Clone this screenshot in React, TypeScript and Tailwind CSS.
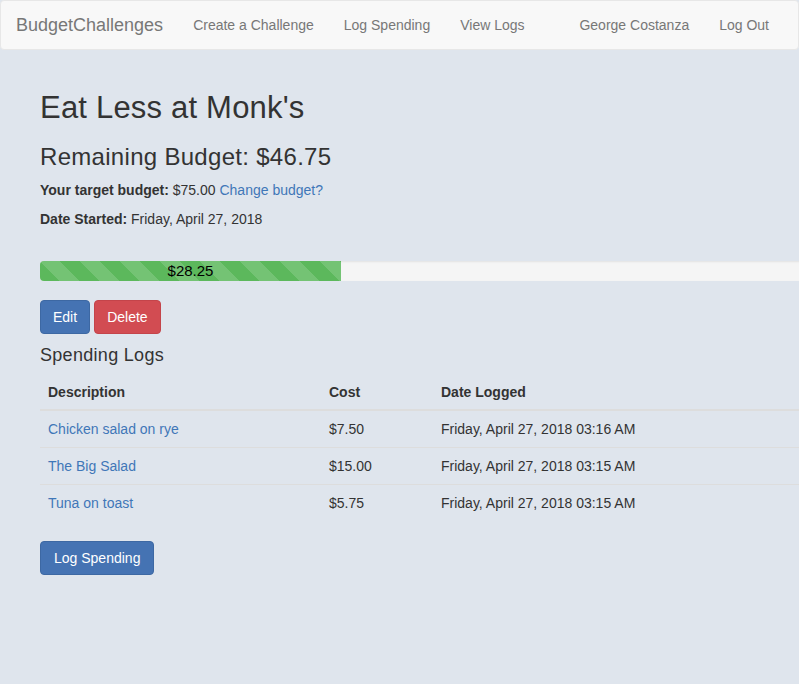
import React from "react";

type Log = {
  description: string;
  cost: string;
  date: string;
};

const logs: Log[] = [
  { description: "Chicken salad on rye", cost: "$7.50", date: "Friday, April 27, 2018 03:16 AM" },
  { description: "The Big Salad", cost: "$15.00", date: "Friday, April 27, 2018 03:15 AM" },
  { description: "Tuna on toast", cost: "$5.75", date: "Friday, April 27, 2018 03:15 AM" },
];

const Navbar = () => (
  <nav className="h-[50px] bg-[#f8f8f8] border border-[#e7e7e7] rounded-[4px] flex items-center justify-between text-[14px] text-[#777]">
    <div className="flex items-center">
      <a className="px-[15px] text-[18px] text-[#777]">BudgetChallenges</a>
      <a className="px-[15px]">Create a Challenge</a>
      <a className="px-[15px]">Log Spending</a>
      <a className="px-[15px]">View Logs</a>
    </div>
    <div className="flex items-center pr-[14px]">
      <a className="px-[15px]">George Costanza</a>
      <a className="px-[15px]">Log Out</a>
    </div>
  </nav>
);

const App = () => {
  return (
    <div className="min-h-[684px] w-full bg-[#dfe5ed] font-['Liberation_Sans',Arial,sans-serif] text-[14px] leading-[20px] text-[#333] overflow-hidden">
      <Navbar />
      <main className="pl-10 pt-[41px] w-[820px]">
        <h1 className="text-[31px] leading-[33px] tracking-[0.2px] mb-5">Eat Less at Monk's</h1>
        <h2 className="text-[24px] leading-[26px] tracking-[0.3px] mb-[10px]">Remaining Budget: $46.75</h2>
        <p className="mb-[9px]">
          <b>Your target budget:</b> $75.00{" "}
          <a className="text-[#3f77b8]">Change budget?</a>
        </p>
        <p className="mb-8">
          <b>Date Started:</b> Friday, April 27, 2018
        </p>

        <div className="h-5 bg-[#f5f5f5] rounded-[4px] overflow-hidden mb-[19px] shadow-[inset_0_1px_2px_rgba(0,0,0,0.08)]">
          <div className="h-5 w-[301px] bg-[#5cb85c] bg-[linear-gradient(45deg,rgba(255,255,255,.15)_25%,transparent_25%,transparent_50%,rgba(255,255,255,.15)_50%,rgba(255,255,255,.15)_75%,transparent_75%,transparent)] bg-[length:40px_40px] text-center text-[15px] leading-5 text-black">
            $28.25
          </div>
        </div>

        <div className="flex gap-1 mb-[11px]">
          <button className="h-[34px] px-3 rounded-[4px] bg-[#4573b3] border border-[#3d68a3] text-white">
            Edit
          </button>
          <button className="h-[34px] px-3 rounded-[4px] bg-[#d24c52] border border-[#c4444a] text-white">
            Delete
          </button>
        </div>

        <h4 className="text-[18px] leading-5 tracking-[0.3px] mb-[9px]">Spending Logs</h4>

        <table className="w-full border-collapse mb-5">
          <thead>
            <tr>
              <th className="w-[281px] text-left font-bold px-2 pt-2 pb-[7px] border-b-2 border-[#dddddd]">Description</th>
              <th className="w-[112px] text-left font-bold px-2 pt-2 pb-[7px] border-b-2 border-[#dddddd]">Cost</th>
              <th className="text-left font-bold px-2 pt-2 pb-[7px] border-b-2 border-[#dddddd]">Date Logged</th>
            </tr>
          </thead>
          <tbody>
            {logs.map((log, i) => (
              <tr key={i}>
                <td className="px-2 py-2 border-t border-[#dddddd]">
                  <a className="text-[#3f77b8]">{log.description}</a>
                </td>
                <td className="px-2 py-2 border-t border-[#dddddd]">{log.cost}</td>
                <td className="px-2 py-2 border-t border-[#dddddd]">{log.date}</td>
              </tr>
            ))}
          </tbody>
        </table>

        <button className="h-[34px] px-[13px] rounded-[4px] bg-[#4573b3] border border-[#3d68a3] text-white">
          Log Spending
        </button>
      </main>
    </div>
  );
};

export default App;
